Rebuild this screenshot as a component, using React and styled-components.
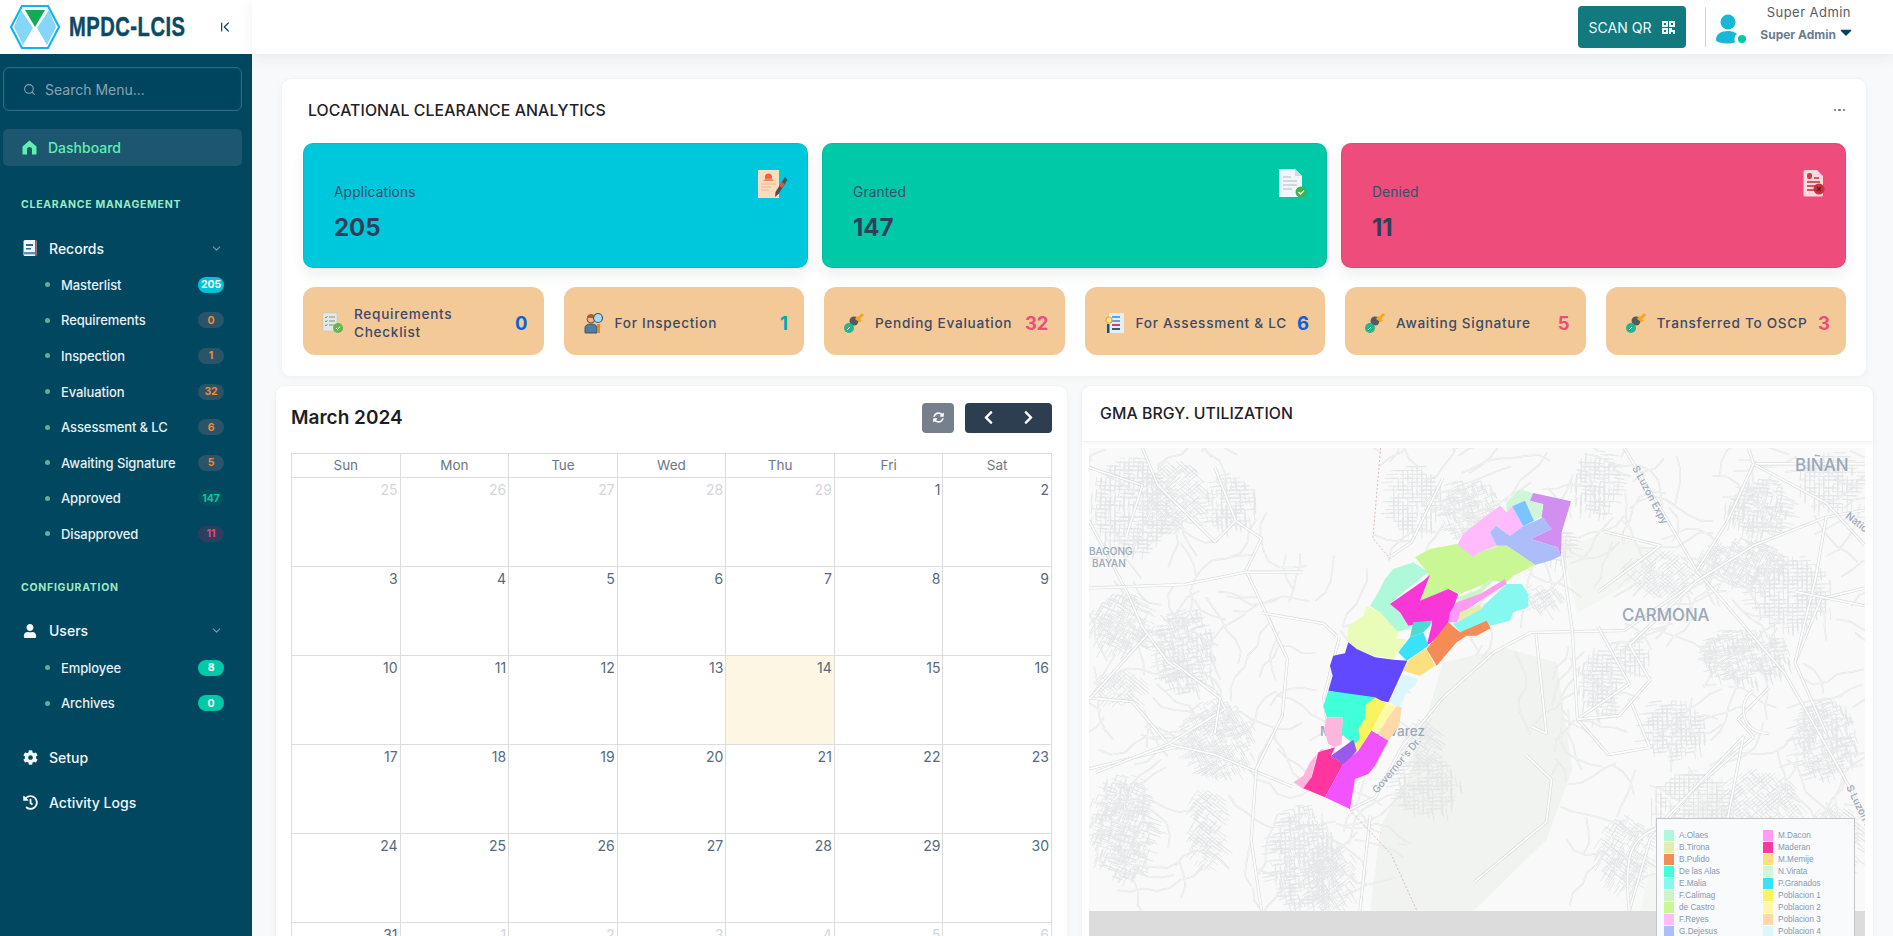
import React from "react";
import styled, { createGlobalStyle } from "styled-components";
import { FaUser, FaCog, FaHistory, FaCaretDown, FaChevronLeft, FaChevronRight, FaSyncAlt } from "react-icons/fa";
import { Search, ChevronDown, ChevronFirst } from "lucide-react";

const Global = createGlobalStyle`
  * { box-sizing: border-box; }
  html, body { margin: 0; height: 100%; overflow: hidden; background: #f8f9fb; font-family: Inter, "Liberation Sans", sans-serif; }
  #root { height: 100%; }
`;

const Page = styled.div`display: flex; height: 936px; overflow: hidden;`;
const Side = styled.aside`width: 252px; flex: none; background: #00475f; height: 100%; display: flex; flex-direction: column;`;
const Brand = styled.div`height: 54px; background: #fff; display: flex; align-items: center; padding-left: 9px; color: #00475f;`;
const BrandName = styled.div`
  font-family: "Liberation Sans", sans-serif; font-weight: 700; font-size: 24px; letter-spacing: .6px; -webkit-text-stroke: .4px #0c4a63;
  color: #0c4a63; margin-left: 8px; width: 117px; white-space: nowrap; transform: scale(.84, 1.16); transform-origin: left center;
`;
const Collapse = styled.div`margin-left: 31px; display: flex; color: #00475f;`;
const SearchBox = styled.div`
  margin: 13px 10px 0 3px; height: 44px; border: 1px solid #2f6d85; border-radius: 6px; background: #004560;
  box-shadow: inset 0 0 3px rgba(255,255,255,.08);
  display: flex; align-items: center; gap: 9px; padding-left: 19px; color: #8aa3b0; font-size: 14px;
`;
const DashItem = styled.div`
  margin: 18px 10px 0 3px; height: 37px; border-radius: 5px; background: #1c566f; color: #5ef0b0;
  display: flex; align-items: center; gap: 11px; padding: 0 0 1px 19px; font-size: 14px; font-weight: 500;
`;
const SectionTitle = styled.div`
  margin-top: ${p => p.$top}px; padding-left: 21px; height: 14px; line-height: 14px;
  font-size: 10.5px; font-weight: 700; letter-spacing: .72px; color: #9fe7c5;
`;
const MenuRow = styled.div`
  margin-top: ${p => p.$top}px; height: 24px; display: flex; align-items: center; color: #f2f7f9;
  font-size: 14px; font-weight: 500; padding: 0 29px 0 23px;
`;
const MenuIcon = styled.span`width: 26px; display: flex; align-items: center; flex: none;`;
const Grow = styled.span`flex: 1;`;
const Chevron = styled.span`display: flex; color: #7f9cab;`;
const SubList = styled.div`margin-top: 7px; display: flex; flex-direction: column;`;
const SubRow = styled.div`
  height: 35.6px; display: flex; align-items: center; padding: 0 28px 0 45px; color: #e8f0f4; font-size: 13px; font-weight: 500; letter-spacing: -.1px;
`;
const Dot = styled.i`width: 5px; height: 5px; border-radius: 50%; background: #69ab96; margin-right: 11px; flex: none;`;
const Badge = styled.span`
  width: 26px; height: 16px; border-radius: 8px; background: ${p => p.$bg}; color: ${p => p.$fg};
  font-size: 10.5px; font-weight: 700; display: flex; align-items: center; justify-content: center;
`;

const Main = styled.main`flex: 1; min-width: 0; display: flex; flex-direction: column;`;
const Top = styled.header`
  height: 54px; flex: none; background: #fff; box-shadow: 0 4px 14px rgba(30,40,60,.07); display: flex; align-items: center; justify-content: flex-end; padding-right: 40px;
`;
const ScanBtn = styled.div`
  width: 108px; height: 42px; border-radius: 4px; background: #12797f; color: #eefafa; font-size: 14px; display: flex; align-items: center; justify-content: center; gap: 11px;
`;
const Divider = styled.div`width: 1px; height: 40px; background: #cfd4d8; margin: 0 10px 0 19px;`;
const AvatarWrap = styled.div`position: relative; width: 30px; height: 30px; display: flex; margin-top: 3px;`;
const Online = styled.i`position: absolute; right: 0; bottom: 1px; width: 8px; height: 8px; border-radius: 50%; background: #00c9a7;`;
const UserBox = styled.div`display: flex; flex-direction: column; align-items: flex-end; width: 107px; margin-top: -9px;`;
const UserName = styled.div`font-size: 13px; letter-spacing: .45px; color: #555c66; line-height: 18px; margin-right: 2px;`;
const UserRole = styled.div`font-size: 12px; font-weight: 700; color: #6b7c93; line-height: 16px; margin-top: 6px; display: flex; align-items: center; gap: 1px;`;
const Caret = styled.span`color: #00475f; display: flex; margin-right: -2px; margin-top: -5px;`;

const Content = styled.div`padding: 24px 26px 0 29px; display: flex; flex-direction: column;`;
const Card = styled.section`background: #fff; border-radius: 10px; border: 1px solid #f2f3f5; box-shadow: 0 2px 8px rgba(30,40,60,.03);`;
const Analytics = styled(Card)`height: 299px; padding: 0 20px 0 21px; display: flex; flex-direction: column;`;
const AHead = styled.div`height: 63px; display: flex; align-items: center; justify-content: space-between; padding: 0 1px 1px 5px;`;
const H = styled.h2`margin: 0; font-size: 15.8px; font-weight: 500; color: #1f2229; letter-spacing: .1px;`;
const More = styled.div`display: flex; gap: 2px;`;
const MoreDot = styled.i`width: 2.5px; height: 2.5px; background: #5b6f8a; border-radius: 50%;`;
const BigRow = styled.div`display: grid; grid-template-columns: repeat(3, 1fr); gap: 14px; margin-top: 1px;`;
const BigCard = styled.div`
  position: relative; height: 125px; border-radius: 10px; background: ${p => p.$c}; box-shadow: 0 8px 14px rgba(30,40,60,.07), inset 0 0 0 1px rgba(0,0,0,.05);
  padding: 39px 0 0 31px; color: #2f4260;
`;
const BigLabel = styled.div`font-size: 13.8px; line-height: 20px; color: #36506c; letter-spacing: .1px;`;
const BigNum = styled.div`font-size: 24px; font-weight: 700; line-height: 30px; margin-top: 11px; color: #2d3f5a;`;
const BigIcon = styled.span`position: absolute; top: 26px; right: 20px; display: flex;`;
const SmallRow = styled.div`display: grid; grid-template-columns: repeat(6, 1fr); gap: 20px; margin-top: 19px;`;
const SmallCard = styled.div`
  height: 68px; border-radius: 12px; background: #f4c998; display: flex; align-items: center; padding: 4px 16px 0 18px; gap: 9px;
`;
const SmallIcon = styled.span`display: flex; flex: none; width: 24px; justify-content: center;`;
const SmallLabel = styled.div`flex: 1; font-size: 13.6px; font-weight: 500; line-height: 18px; color: #3b4a66; letter-spacing: .72px;`;
const SmallNum = styled.div`font-size: 18.5px; font-weight: 700; color: ${p => p.$c};`;

const Lower = styled.div`display: grid; grid-template-columns: 1fr 1fr; gap: 13px; margin: 8px -7px 0 -6px;`;
const CalCard = styled(Card)`padding: 0 15px; height: 700px;`;
const CalHead = styled.div`height: 67px; display: flex; align-items: center;`;
const CalTitle = styled.h3`margin: 0; flex: 1; font-size: 19px; font-weight: 600; color: #1c1e24; position: relative; top: -2px;`;
const RefreshBtn = styled.div`
  width: 32px; height: 30px; border-radius: 4px; background: #76808c; color: #fff; display: flex; align-items: center; justify-content: center; margin-right: 11px; position: relative; top: -2px;
`;
const NavBtn = styled.div`
  width: 87px; height: 30px; border-radius: 4px; background: #2c3e50; color: #fff; display: flex; align-items: center; justify-content: space-around; padding: 0 4px; position: relative; top: -2px;
`;
const Table = styled.div`display: grid; grid-template-columns: repeat(7, 1fr); border-top: 1px solid #ddd; border-left: 1px solid #ddd;`;
const Th = styled.div`
  height: 24px; border-right: 1px solid #ddd; border-bottom: 1px solid #ddd; text-align: center; font-size: 13.5px; line-height: 22px; color: #6b7785;
`;
const Td = styled.div`
  height: 89px; border-right: 1px solid #ddd; border-bottom: 1px solid #ddd; text-align: right; padding: 2px 2px 0 0;
  font-size: 14px; line-height: 20px; color: ${p => (p.$dim ? "#d3d7dc" : "#566a80")}; background: ${p => (p.$today ? "#fcf6e3" : "transparent")};
`;

const MapCard = styled(Card)`height: 700px;`;
const MapHead = styled.div`height: 56px; display: flex; align-items: center; padding-left: 18px; border-bottom: 1px solid #f3f3f3; box-shadow: 0 2px 3px rgba(30,40,60,.03);`;
const MapBox = styled.div`position: relative; margin: 6px 8px 0 7px; height: 560px; background: #dcdcdc; overflow: hidden;`;
const MapSvg = styled.svg`display: block;`;
const Legend = styled.div`
  position: absolute; left: 567px; top: 370px; width: 199px; padding: 10px 7px 6px 7px; background: #f8fafc; border: 1px solid #c4c6c8;
  display: grid; grid-template-columns: 99px 1fr; grid-auto-rows: 12px; font-family: "Liberation Sans", sans-serif;
`;
const LegendItem = styled.div`display: flex; align-items: center; gap: 5px; font-size: 8.2px; color: #8a99ad;`;
const Swatch = styled.i`width: 10px; height: 11px; background: ${p => p.$c}; flex: none;`;

const Logo = () => (
  <svg width="52" height="46" viewBox="0 0 52 46">
    <path d="M13 2 H39 L50 23 L39 44 H13 L2 23 Z" fill="#fff" stroke="#12b3ee" strokeWidth="2.2" />
    <path d="M12 6 L24 24 L14 41 L5 23 Z M40 6 L28 24 L38 41 L47 23 Z" fill="#85d6f8" />
    <path d="M16 6 H36 L26 23 Z" fill="#12ab53" />
  </svg>
);
const HomeIcon = () => (
  <svg width="15" height="15" viewBox="0 0 15 15" fill="#5ef0b0">
    <path d="M7.500 0.500L14.500 6.500V14.500H10V9.500C10 8 9 7 7.500 7S5 8 5 9.500V14.500H.5V6.500Z" />
  </svg>
);
const RecordIcon = () => (
  <svg width="14" height="16" viewBox="0 0 14 16">
    <rect x=".5" y="0" width="13" height="16" rx="1.5" fill="#f4f8fa" />
    <rect x="12" y="0" width="1.5" height="16" fill="#b54b5c" />
    <path d="M3 4h7v2H3zM3 8h5v1.5H3z" fill="#2f6b8a" />
    <rect x="1" y="12" width="11" height="2.4" fill="#5a93b0" />
  </svg>
);
const QrIcon = () => (
  <svg width="13" height="13" viewBox="0 0 13 13" fill="#eefafa">
    <path d="M0 0h6v6H0zM2 2v2h2V2zM7 0h6v6H7zM9 2v2h2V2zM0 7h6v6H0zM2 9v2h2V9zM7 7h3v2h3v4h-2v-2H9v2H7z" fillRule="evenodd" />
  </svg>
);
const Avatar = () => (
  <svg width="26" height="30" viewBox="0 0 26 30" fill="#19b7d6">
    <circle cx="12" cy="8" r="7.5" />
    <path d="M0 26c0-6 5-9 12-9 4 0 7 1 9 3-2 1-3 4-2 8-2 1-4 1.5-7 1.5C6 29.500 0 28 0 26z" />
  </svg>
);
const DocPen = () => (
  <svg width="30" height="30" viewBox="0 0 30 30">
    <path d="M0 1h21v28H0z" fill="#fbdcc0" />
    <circle cx="10.500" cy="8" r="3.500" fill="#f0623d" />
    <path d="M5 12c1-2 3-2.500 5.500-2.500S15 10 16 12z" fill="#f88a5e" />
    <path d="M3 15h15M3 18h10M3 21h8" stroke="#e9b48b" strokeWidth="1" />
    <path d="M27 8l2.500 3-9 14-3.500 3 .5-5z" fill="#4a4f5a" />
    <path d="M24 13l2.500 2-2.500 4-2.500-2z" fill="#e6573b" />
  </svg>
);
const DocCheck = () => (
  <svg width="30" height="30" viewBox="0 0 30 30">
    <path d="M2 0h16l7 7v21H2z" fill="#f1f6fa" />
    <path d="M18 0l7 7h-7z" fill="#cfdbe4" />
    <path d="M6 8h8M6 12h14M6 16h14M6 20h9" stroke="#aab9c6" strokeWidth="1.200" />
    <circle cx="24" cy="23" r="5.500" fill="#39b54a" />
    <path d="M21.500 23l2 2 3.500-3.500" stroke="#fff" strokeWidth="1.300" fill="none" />
  </svg>
);
const DocX = () => (
  <svg width="24" height="28" viewBox="0 0 24 28">
    <path d="M3 1h12l6 6v19a1.500 1.500 0 0 1-1.500 1.500H3A1.500 1.500 0 0 1 1.500 26V2.500A1.500 1.500 0 0 1 3 1z" fill="#fdd8dc" />
    <rect x="5" y="4" width="5" height="6" rx="2" fill="#d63a44" />
    <path d="M12 9h5M5 13h13M5 17h9M5 21h7" stroke="#b8323b" strokeWidth="1.500" />
    <circle cx="17" cy="20" r="5.500" fill="#c9323c" />
    <path d="M15 18l4 4m0-4l-4 4" stroke="#6c1a22" strokeWidth="1.300" />
  </svg>
);
const CheckList = () => (
  <svg width="22" height="22" viewBox="0 0 22 22">
    <rect x="1" y="1" width="14" height="18" fill="#e4e8e6" stroke="#c3c9c6" strokeWidth=".6" />
    <path d="M3 5l1 1 1.500-2M7 5h6M3 9l1 1 1.500-2M7 9h6M3 13l1 1 1.500-2M7 13h5" stroke="#6f8f78" strokeWidth=".9" fill="none" />
    <circle cx="16" cy="16" r="5" fill="#62b948" />
    <path d="M14 16l1.500 1.500 2.500-3" stroke="#fff" strokeWidth="1" fill="none" />
  </svg>
);
const Inspector = () => (
  <svg width="20" height="22" viewBox="0 0 20 22">
    <circle cx="7" cy="7" r="4" fill="#f2b48c" stroke="#4a3a2a" strokeWidth=".8" />
    <path d="M3 6c0-3 2-4 4-4s4 1 4 4z" fill="#a4602e" />
    <path d="M1 21v-5c0-3 3-4 6-4s6 1 6 4v5z" fill="#527f9f" stroke="#2f3f50" strokeWidth=".8" />
    <circle cx="14" cy="6" r="4.500" fill="#a8d8ee" stroke="#365a7a" strokeWidth="1.200" />
    <rect x="13" y="12" width="3" height="9" fill="#d98b2b" />
  </svg>
);
const Brush = () => (
  <svg width="22" height="22" viewBox="0 0 22 22">
    <path d="M14 8l6-6" stroke="#f8a51c" strokeWidth="3" />
    <circle cx="11" cy="9" r="4.500" fill="#555a60" />
    <path d="M14 4l5 5-3 1-4-3z" fill="#f8a51c" />
    <circle cx="6" cy="16" r="5" fill="#24b48e" />
    <path d="M4 18l3-3" stroke="#fff" strokeWidth="1" />
  </svg>
);
const Assess = () => (
  <svg width="20" height="22" viewBox="0 0 20 22">
    <rect x="4" y="1" width="15" height="20" fill="#e6eef5" />
    <path d="M7 5h8M7 9h8" stroke="#62a4dc" strokeWidth="2" />
    <path d="M7 13h8" stroke="#e23e46" strokeWidth="2" />
    <path d="M7 17h8" stroke="#2c5d8a" strokeWidth="2" />
    <circle cx="4" cy="8" r="3" fill="#fbe9b0" stroke="#e9a820" strokeWidth="1.200" />
    <rect x="2" y="12" width="2.500" height="9" fill="#1d4e72" />
  </svg>
);

const regions = [
  ["#cff6d6", "780,60 740,100 740,125 760,130 795,95 822,155 848,140 845,120 850,105 810,95 825,75"],
  ["#d18fef", "820,72 933,97 905,190 903,260 893,235 812,210 875,180 845,145 850,105 810,95"],
  ["#ffbbfb", "610,195 640,170 720,110 740,130 757,112 790,172 750,200 728,185 708,170 690,190 710,230 660,250 640,265 590,230"],
  ["#7cc4ff", "757,112 795,95 822,155 790,172"],
  ["#adbdf9", "708,170 690,190 710,230 740,230 785,260 825,288 870,275 903,260 893,235 812,210 875,180 850,145 790,172 750,200 728,185"],
  ["#c8f793", "465,265 510,240 590,225 640,265 660,250 710,232 740,230 785,260 825,288 760,320 740,340 700,335 660,350 600,375 565,360 480,395 505,318 495,300"],
  ["#aff9da", "400,300 460,280 505,310 490,320 430,370 390,405 420,430 445,470 510,450 470,470 410,490 360,430 330,410 355,370 375,330"],
  ["#f936d6", "390,405 490,335 510,318 480,395 565,360 595,375 565,460 540,500 500,530 515,470 515,455 445,470 420,430"],
  ["#86f8f0", "740,345 785,345 805,375 805,415 760,430 750,455 690,470 600,490 580,465 660,420"],
  ["#cbf5c4", "595,385 660,360 680,335 700,335 660,375 590,400"],
  ["#ff9bf4", "570,430 590,400 660,375 735,330 740,345 660,395 610,430 590,460 565,460"],
  ["#e2eeaa", "600,430 660,405 665,420 620,445 595,460"],
  ["#f58b55", "565,460 600,490 680,455 692,478 650,500 620,500 590,520 530,590 500,540"],
  ["#fce07f", "498,538 525,590 480,620 430,605 445,575"],
  ["#3ae2f9", "450,505 490,490 505,530 440,575 415,550"],
  ["#4ddcd0", "460,460 515,455 510,470 490,490 450,505"],
  ["#e9fdb9", "320,410 360,430 415,490 410,510 440,510 400,570 345,560 290,545 262,510 265,470 310,440"],
  ["#6049ff", "265,520 290,540 345,565 400,572 442,575 385,700 205,665 218,620 210,590 220,560 255,553"],
  ["#dbf7fc", "430,615 475,630 465,650 440,670 420,715 388,700"],
  ["#40ffd9", "205,665 345,685 315,710 315,750 295,780 300,810 285,830 245,795 248,745 200,745 190,710"],
  ["#f8f45f", "345,685 378,703 335,785 295,845 275,832 300,810 295,780 315,750 315,710"],
  ["#fdf9a9", "378,703 410,712 385,745 355,795 335,785"],
  ["#ffd9a8", "410,712 425,715 418,770 385,815 355,795 385,745"],
  ["#ffb6dc", "200,745 248,745 245,825 225,835 205,825 192,780"],
  ["#ffb6dc", "185,840 225,850 170,860 150,940 130,960 100,940 130,920 150,880"],
  ["#ff35a0", "175,850 225,835 213,860 250,885 195,985 130,958 155,925"],
  ["#9b59ea", "213,860 280,812 290,845 255,890"],
  ["#f053ff", "335,785 385,815 345,890 325,915 285,930 270,1020 195,985 250,885 295,845"],
];

const roads = [
  "M1050 195L1110 340L1190 540L1360 830L1450 1060L1515 1230",
  "M17 900L100 910L170 1030L260 1060L410 1150",
  "M520 1215L570 1180L620 1040L700 900L800 770L870 715L1050 710L1190 570L1300 470L1440 390L1515 370",
  "M17 400L90 600L120 700L170 800L260 880L280 930L170 1030",
  "M260 250L300 400L350 450L320 540L400 790L390 950L340 1100L330 1300L350 1500",
  "M930 500L950 710L960 960L1060 860L1000 700",
  "M17 590L200 580L320 545L430 545",
  "M350 660L470 690L495 725",
  "M1330 870L1270 960L1300 1010L1190 1150L1100 1300L1060 1500",
  "M1515 590L1430 620L1380 800",
  "M860 1060L910 1130L900 1250L760 1420",
  "M960 960L1020 1060L1100 1040L1060 900",
  "M120 195L150 300L260 460L300 400",
  "M1290 195L1300 240L1515 240",
  "M1300 240L1440 350L1515 470",
  "M540 1500L560 1230",
  "M17 1100L180 1040",
  "M700 280L640 460L600 500",
  "M1300 240L1250 400L1190 540",
  "M1440 390L1420 560L1380 800L1440 1000",
  "M1190 570L1060 750L1100 850L1040 950L960 960",
  "M880 720L900 1000L870 980",
  "M1300 880C1270 900 1270 1000 1330 1000",
  "M1060 1500C1050 1350 1060 1300 1110 1270L1280 1010L1250 1240",
  "M170 1030L30 1110",
  "M130 720L20 900",
  "M180 800L270 900L260 1000",
  "M480 1000L470 900L500 730",
  "M1380 600L1515 640",
  "M17 250L120 300L90 440",
  "M1010 430L1120 470L1000 600",
];

const clusters = [
  [20,220,150,270],[20,600,120,170],[150,640,110,240],[200,900,130,220],[20,1110,120,300],[370,1200,120,290],
  [600,240,100,190],[700,280,110,170],[950,200,90,180],[1050,480,140,120],[1190,450,170,130],[1200,700,170,150],
  [1090,900,120,170],[1300,500,150,200],[1390,210,110,150],[1380,900,120,220],[1100,1110,150,190],[1000,1230,100,200],
  [630,950,60,130],[610,1060,120,170],[850,580,80,70],[210,1150,70,220],[1040,730,60,90],[240,270,100,150],[890,420,60,90],
  [1240,1100,150,200],[1400,1200,110,200],[440,1300,90,190],[20,820,100,90],[130,220,110,200],[1250,280,120,160],[960,760,80,190],
];

const calm = [[370,195,190,290],[640,1020,270,480],[640,800,190,220],[1120,800,80,80]];

const mulberry = seed => () => {
  seed = (seed + 0x6d2b79f5) | 0;
  let t = Math.imul(seed ^ (seed >>> 15), 1 | seed);
  t = (t + Math.imul(t ^ (t >>> 7), 61 | t)) ^ t;
  return ((t ^ (t >>> 14)) >>> 0) / 4294967296;
};
const inCalm = (x, y) => calm.some(([a, b, w, h]) => x > a && x < a + w && y > b && y < b + h);

const buildMinor = () => {
  const r = mulberry(77);
  let d = "";
  for (let i = 0; i < 340; i += 1) {
    let x = 17 + r() * 1498;
    let y = 195 + r() * 1305;
    let a = r() * 6.28;
    if (inCalm(x, y)) continue;
    d += `M${x.toFixed(0)} ${y.toFixed(0)}`;
    const n = 3 + Math.floor(r() * 5);
    for (let k = 0; k < n; k += 1) {
      a += (r() - 0.5) * 1.300;
      x += Math.cos(a) * 26;
      y += Math.sin(a) * 36;
      if (inCalm(x, y)) break;
      d += `L${x.toFixed(0)} ${y.toFixed(0)}`;
    }
  }
  return d;
};
const buildStreets = () => {
  const r = mulberry(1234);
  let d = "";
  clusters.forEach(([x, y, w, h]) => {
    const a = r() * 1.570;
    const ca = Math.cos(a);
    const sa = Math.sin(a);
    const cx = x + w / 2;
    const cy = y + h / 2;
    for (let i = 0; i < w * h / 55; i += 1) {
      const dx = (r() - 0.5) * w;
      const dy = (r() - 0.5) * h;
      if ((dx * dx) / (w * w) + (dy * dy) / (h * h) > 0.25) continue;
      const gx = Math.round(dx / 9) * 9;
      const gy = Math.round(dy / 11) * 11;
      const hor = r() > 0.5;
      const len = 9 + r() * 18;
      const ex = hor ? ca * len : -sa * len;
      const ey = hor ? sa * len * 1.400 : ca * len * 1.400;
      d += `M${(cx + gx).toFixed(0)} ${(cy + gy).toFixed(0)}l${ex.toFixed(0)} ${ey.toFixed(0)}`;
    }
  });
  return d;
};
const minorPath = buildMinor();
const streetPath = buildStreets();

const MapDrawing = () => (
  <MapSvg width="776" height="463" viewBox="0 0 776 463" preserveAspectRatio="none">
    <rect width="776" height="463" fill="#f9f9f9" />
    <g transform="scale(.518 .3546) translate(-17 -195)">
      <path d="M700 800L820 760L920 800L950 1100L900 1300L760 1500H560L580 1260L640 1100Z" fill="#f0f3f0" />
      <path d="M1120 1280L1240 1120L1250 1300L1200 1500H1080Z" fill="#f4f6f4" />
      <path d="M930 480L1020 430L1100 480L1080 560L960 660Z" fill="#f4f6f3" />
      <path d={streetPath} stroke="#e4e5e6" strokeWidth=".9" fill="none" vectorEffect="non-scaling-stroke" />
      <path d={minorPath} stroke="#e0e1e2" strokeWidth="1.600" strokeLinejoin="round" fill="none" vectorEffect="non-scaling-stroke" />
      <path d={minorPath} stroke="#fbfbfb" strokeWidth=".7" strokeLinejoin="round" fill="none" vectorEffect="non-scaling-stroke" />
      {roads.map((d, i) => (
        <g key={i}>
          <path d={d} stroke="#d8dadb" strokeWidth="3" strokeLinejoin="round" fill="none" vectorEffect="non-scaling-stroke" />
          <path d={d} stroke="#fdfdfd" strokeWidth="1.800" strokeLinejoin="round" fill="none" vectorEffect="non-scaling-stroke" />
        </g>
      ))}
      <path d="M580 195L565 450L600 510M520 1215L600 1340L650 1500" stroke="#e0b8b8" strokeWidth="1" strokeDasharray="2 2" fill="none" vectorEffect="non-scaling-stroke" />
    </g>
    <g fontFamily="Inter, sans-serif" fill="#9aa8b8" fontWeight="500">
      <text x="706" y="23" fontSize="17">BIÑAN</text>
      <text x="533" y="173" fontSize="16.800">CARMONA</text>
      <text x="0" y="107" fontSize="10">BAGONG</text>
      <text x="3" y="119" fontSize="10">BAYAN</text>
      <text x="336" y="288" fontSize="13.500" textAnchor="end">Mariano Alvarez</text>
      <text fontSize="10" transform="translate(288 346) rotate(-50)">Governor's Dr.</text>
      <text fontSize="10" transform="translate(543 20) rotate(62)">S Luzon Expy</text>
      <text fontSize="10" transform="translate(757 339) rotate(64)">S Luzon E</text>
      <text fontSize="10" transform="translate(756 69) rotate(39)">Natio</text>
    </g>
    <g transform="translate(171 21) scale(.3333)">
      {regions.map(([c, p], i) => <polygon key={i} points={p} fill={c} />)}
    </g>
  </MapSvg>
);

const legend = [
  ["A.Olaes", "#aff9da"], ["M.Dacon", "#ff9bf4"], ["B.Tirona", "#e2eeaa"], ["Maderan", "#ff35a0"],
  ["B.Pulido", "#f58b55"], ["M.Memije", "#fce07f"], ["De las Alas", "#40ffd9"], ["N.Virata", "#cff6d6"],
  ["E.Malia", "#86f8f0"], ["P.Granados", "#3ae2f9"], ["F.Calimag", "#cbf5c4"], ["Poblacion 1", "#f8f45f"],
  ["de Castro", "#c8f793"], ["Poblacion 2", "#fdf9a9"], ["F.Reyes", "#ffbbfb"], ["Poblacion 3", "#ffd9a8"],
  ["G.Dejesus", "#adbdf9"], ["Poblacion 4", "#dbf7fc"],
];

const GREY = "#2a5468";
const records = [
  ["Masterlist", "205", "#00c2d8", "#fff"], ["Requirements", "0", GREY, "#f08a3c"], ["Inspection", "1", GREY, "#f08a3c"],
  ["Evaluation", "32", GREY, "#f08a3c"], ["Assessment & LC", "6", GREY, "#f08a3c"], ["Awaiting Signature", "5", GREY, "#f08a3c"],
  ["Approved", "147", "#04505f", "#00c9a7"], ["Disapproved", "11", "#2b3f5e", "#e8467a"],
];
const users = [["Employee", "8", "#00c9a7", "#fff"], ["Archives", "0", "#00c9a7", "#fff"]];

const small = [
  ["Requirements Checklist", "0", "#0f5fd8", <CheckList />],
  ["For Inspection", "1", "#0aa3bd", <Inspector />],
  ["Pending Evaluation", "32", "#ee4c7c", <Brush />],
  ["For Assessment & LC", "6", "#0f5fd8", <Assess />],
  ["Awaiting Signature", "5", "#ee4c7c", <Brush />],
  ["Transferred To OSCP", "3", "#ee4c7c", <Brush />],
];
const bigs = [
  ["Applications", "205", "#00c8dc", <DocPen />],
  ["Granted", "147", "#00c9a7", <DocCheck />],
  ["Denied", "11", "#ee4c7a", <DocX />],
];
const days = ["Sun", "Mon", "Tue", "Wed", "Thu", "Fri", "Sat"];
const cells = [
  ...[25, 26, 27, 28, 29].map(n => ({ n, dim: true })),
  ...Array.from({ length: 31 }, (_, i) => ({ n: i + 1 })),
  ...[1, 2, 3, 4, 5, 6].map(n => ({ n, dim: true })),
];

const SubItems = ({ items }) => (
  <SubList>
    {items.map(([label, n, bg, fg]) => (
      <SubRow key={label}><Dot /><Grow>{label}</Grow><Badge $bg={bg} $fg={fg}>{n}</Badge></SubRow>
    ))}
  </SubList>
);

export default function App() {
  return (
    <Page>
      <Global />
      <Side>
        <Brand>
          <Logo />
          <BrandName>MPDC-LCIS</BrandName>
          <Collapse><ChevronFirst size={16} strokeWidth={1.800} /></Collapse>
        </Brand>
        <SearchBox><Search size={13} />Search Menu...</SearchBox>
        <DashItem><HomeIcon />Dashboard</DashItem>
        <SectionTitle $top={32}>CLEARANCE MANAGEMENT</SectionTitle>
        <MenuRow $top={24}>
          <MenuIcon><RecordIcon /></MenuIcon><Grow>Records</Grow>
          <Chevron><ChevronDown size={13} /></Chevron>
        </MenuRow>
        <SubItems items={records} />
        <SectionTitle $top={29}>CONFIGURATION</SectionTitle>
        <MenuRow $top={24}>
          <MenuIcon><FaUser size={14} /></MenuIcon><Grow>Users</Grow>
          <Chevron><ChevronDown size={13} /></Chevron>
        </MenuRow>
        <SubItems items={users} />
        <MenuRow $top={25}><MenuIcon><FaCog size={15} /></MenuIcon><Grow>Setup</Grow></MenuRow>
        <MenuRow $top={21}><MenuIcon><FaHistory size={15} /></MenuIcon><Grow>Activity Logs</Grow></MenuRow>
      </Side>
      <Main>
        <Top>
          <ScanBtn>SCAN QR <QrIcon /></ScanBtn>
          <Divider />
          <AvatarWrap><Avatar /><Online /></AvatarWrap>
          <UserBox>
            <UserName>Super Admin</UserName>
            <UserRole>Super Admin <Caret><FaCaretDown size={18} /></Caret></UserRole>
          </UserBox>
        </Top>
        <Content>
          <Analytics>
            <AHead>
              <H>LOCATIONAL CLEARANCE ANALYTICS</H>
              <More><MoreDot /><MoreDot /><MoreDot /></More>
            </AHead>
            <BigRow>
              {bigs.map(([l, n, c, ic]) => (
                <BigCard key={l} $c={c}>
                  <BigLabel>{l}</BigLabel>
                  <BigNum>{n}</BigNum>
                  <BigIcon>{ic}</BigIcon>
                </BigCard>
              ))}
            </BigRow>
            <SmallRow>
              {small.map(([l, n, c, ic]) => (
                <SmallCard key={l}>
                  <SmallIcon>{ic}</SmallIcon>
                  <SmallLabel>{l}</SmallLabel>
                  <SmallNum $c={c}>{n}</SmallNum>
                </SmallCard>
              ))}
            </SmallRow>
          </Analytics>
          <Lower>
            <CalCard>
              <CalHead>
                <CalTitle>March 2024</CalTitle>
                <RefreshBtn><FaSyncAlt size={11} /></RefreshBtn>
                <NavBtn><FaChevronLeft size={15} /><FaChevronRight size={15} /></NavBtn>
              </CalHead>
              <Table>
                {days.map(d => <Th key={d}>{d}</Th>)}
                {cells.map((c, i) => <Td key={i} $dim={c.dim} $today={!c.dim && c.n === 14}>{c.n}</Td>)}
              </Table>
            </CalCard>
            <MapCard>
              <MapHead><H>GMA BRGY. UTILIZATION</H></MapHead>
              <MapBox>
                <MapDrawing />
                <Legend>
                  {legend.map(([l, c]) => <LegendItem key={l}><Swatch $c={c} />{l}</LegendItem>)}
                </Legend>
              </MapBox>
            </MapCard>
          </Lower>
        </Content>
      </Main>
    </Page>
  );
}
